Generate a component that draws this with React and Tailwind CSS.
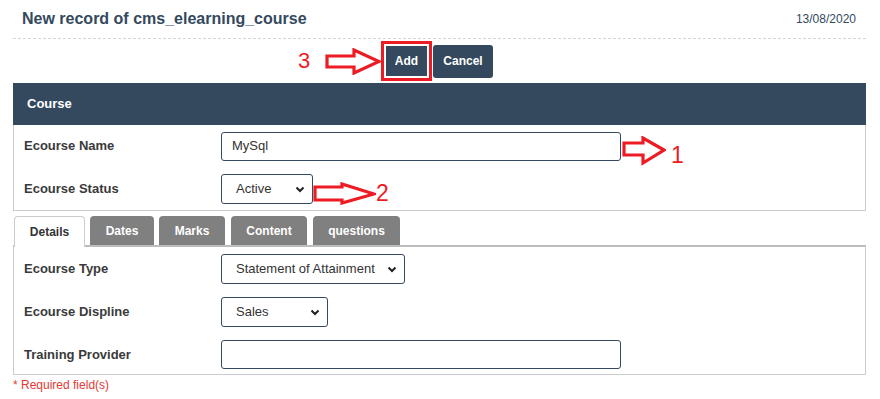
import React from "react";

const slate = "bg-[#34495e]";

function Chevron() {
  return (
    <svg width="10" height="7" viewBox="0 0 10 7" className="shrink-0">
      <path d="M1.5 1.5 L5 5 L8.5 1.5" fill="none" stroke="#222" strokeWidth="2" />
    </svg>
  );
}

function Select({ value, width }) {
  return (
    <div
      className={`flex h-[30px] items-center justify-between rounded-[3px] border border-[#34495e] bg-white pl-[14px] pr-[7px] text-[13px] text-[#333] ${width}`}
    >
      <span>{value}</span>
      <Chevron />
    </div>
  );
}

function TextInput({ value }) {
  return (
    <div className="flex h-[29px] w-[400px] items-center rounded-[3px] border border-[#34495e] bg-white pl-[10px] text-[13px] text-[#333]">
      {value}
    </div>
  );
}

function Row({ label, children }) {
  return (
    <div className="flex items-center">
      <div className="w-[197px] text-[13px] font-bold text-[#3a3a3a]">{label}</div>
      {children}
    </div>
  );
}

// hollow red block arrow used for the numbered annotations
function Arrow({ w, h, points, className = "" }) {
  return (
    <svg width={w} height={h} viewBox={`0 0 ${w} ${h}`} className={`shrink-0 ${className}`}>
      <polygon points={points} fill="white" stroke="#ed1c24" strokeWidth="3.2" strokeLinejoin="miter" />
    </svg>
  );
}

const tabs = [
  { name: "Details", cls: "w-[71px]" },
  { name: "Dates", cls: "ml-[5px] w-[64px]" },
  { name: "Marks", cls: "ml-[5px] w-[66px]" },
  { name: "Content", cls: "ml-[6px] w-[76px]" },
  { name: "questions", cls: "ml-[6px] w-[87px]" },
];

export default function App() {
  return (
    <div className="h-[399px] w-[880px] bg-white font-['Liberation_Sans',Arial,sans-serif]">
      <div className="ml-[13px] w-[853px]">
        {/* Title */}
        <div className="flex h-[39px] items-center justify-between border-b border-dashed border-[#d6d6d6] pl-[9px] pr-[10px]">
          <h1 className="text-[16px] font-bold text-[#34495e]">New record of cms_elearning_course</h1>
          <span className="text-[12px] text-[#34495e]">13/08/2020</span>
        </div>

        {/* Buttons */}
        <div className="flex h-[44px] items-center pl-[285px]">
          <span className="w-[12px] text-[22px] leading-none text-[#ed1c24]">3</span>
          <Arrow
            w={56}
            h={27}
            className="ml-[15px]"
            points="2,8 29,8 29,2 54,13.5 29,25 29,19 2,19"
          />
          <div className="border-[3px] border-[#ed1c24] p-[2px]">
            <button className={`flex h-[30px] w-[41px] items-center justify-center ${slate} text-[12px] font-bold text-white`}>
              Add
            </button>
          </div>
          <button className={`ml-[1px] flex h-[33px] w-[60px] items-center justify-center rounded-[3px] ${slate} text-[12px] font-bold text-white`}>
            Cancel
          </button>
        </div>

        {/* Course panel */}
        <div className={`flex h-[42px] items-center ${slate} pl-[14px] text-[13px] font-bold text-white`}>Course</div>
        <div className="flex flex-col gap-[13px] border-x border-b border-[#cccccc] pb-[6px] pl-[10px] pt-[6px]">
          <Row label="Ecourse Name">
            <TextInput value="MySql" />
            <Arrow
              w={44}
              h={30}
              className="ml-[1px] translate-y-[5px]"
              points="2,7 21,7 21,2 42,14 21,27 21,19 2,19"
            />
            <span className="ml-[5px] translate-y-[9px] text-[23px] font-light leading-none text-[#ed1c24]">1</span>
          </Row>
          <Row label="Ecourse Status">
            <Select value="Active" width="w-[92px]" />
            <Arrow
              w={63}
              h={23}
              className="translate-y-[4px]"
              points="2,5 29,5 29,2 61,12 29,21 29,18 2,18"
            />
            <span className="translate-y-[4px] text-[23px] font-light leading-none text-[#ed1c24]">2</span>
          </Row>
        </div>

        {/* Tabs */}
        <div className="relative z-10 mt-[4px] flex h-[30px] items-end pl-[1px]">
          {tabs.map((t, i) =>
            i === 0 ? (
              <div
                key={t.name}
                className={`-mb-[2px] flex h-[31px] items-center justify-center rounded-t-[4px] border border-b-0 border-[#cccccc] bg-white text-[12px] font-bold text-[#333] ${t.cls}`}
              >
                {t.name}
              </div>
            ) : (
              <div
                key={t.name}
                className={`flex h-[29px] items-center justify-center rounded-t-[4px] bg-[#808080] text-[12px] font-bold text-white ${t.cls}`}
              >
                {t.name}
              </div>
            )
          )}
        </div>

        {/* Details panel */}
        <div className="flex flex-col gap-[13px] border-x border-b border-t-2 border-[#cccccc] border-t-[#bdbdbd] pb-[5px] pl-[10px] pt-[7px]">
          <Row label="Ecourse Type">
            <Select value="Statement of Attainment" width="w-[184px]" />
          </Row>
          <Row label="Ecourse Displine">
            <Select value="Sales" width="w-[107px]" />
          </Row>
          <Row label="Training Provider">
            <TextInput value="" />
          </Row>
        </div>
        <div className="mt-[1px] text-[12px] text-[#e53935]">* Required field(s)</div>
      </div>
    </div>
  );
}
